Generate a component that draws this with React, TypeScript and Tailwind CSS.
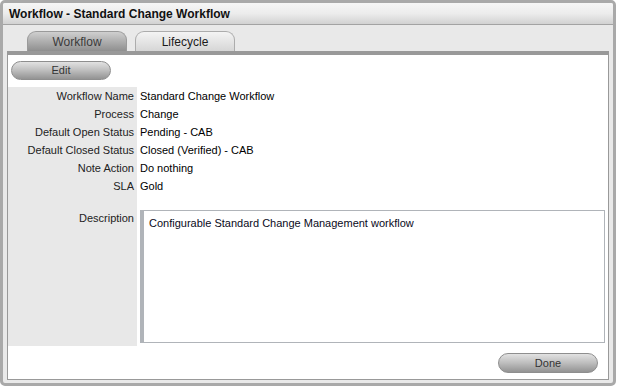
import React from "react";

const rows: [string, string][] = [
  ["Workflow Name", "Standard Change Workflow"],
  ["Process", "Change"],
  ["Default Open Status", "Pending - CAB"],
  ["Default Closed Status", "Closed (Verified) - CAB"],
  ["Note Action", "Do nothing"],
  ["SLA", "Gold"],
];

export default function App() {
  return (
    <div
      className="w-[616px] h-[386px] bg-white"
      style={{ fontFamily: '"Liberation Sans", Arial, Helvetica, sans-serif' }}
    >
      <div className="w-[616px] h-[386px] border-[3px] border-[#a9a9a9] rounded-[5px] bg-[#e9e9e9] flex flex-col overflow-hidden">
        {/* Title bar */}
        <div className="h-[22px] shrink-0 border-b border-[#a3a3a3] bg-gradient-to-b from-[#f6f6f6] via-[#ececec] to-[#d2d2d2] px-[6px] flex items-center">
          <span className="text-[12px] font-bold text-[#111] leading-none">
            Workflow - Standard Change Workflow
          </span>
        </div>
        {/* Tabs */}
        <div className="h-[26px] shrink-0 flex items-end pl-[24px] gap-[8px]">
          <div className="w-[100px] h-[20px] rounded-t-[9px] border border-b-0 border-[#9a9a9a] bg-gradient-to-b from-[#cfcfcf] to-[#8f8f8f] flex items-center justify-center text-[12px] text-[#3a3a3a]">
            Workflow
          </div>
          <div className="w-[100px] h-[20px] rounded-t-[9px] border border-b-0 border-[#acacac] bg-gradient-to-b from-[#f4f4f4] to-[#d6d6d6] flex items-center justify-center text-[12px] text-[#1a1a1a]">
            Lifecycle
          </div>
        </div>
        {/* Content */}
        <div className="flex-1 mx-[4px] mb-[3px] border-t-[4px] border-x border-b border-[#999] bg-white flex flex-col">
          <div className="pt-[6px] pl-[3px]">
            <button className="w-[100px] h-[19px] rounded-full border border-[#8e8e8e] bg-gradient-to-b from-[#e2e2e2] via-[#bdbdbd] to-[#939393] text-[11px] text-[#333] flex items-center justify-center">
              Edit
            </button>
          </div>
          <div className="mt-[7px] grid grid-cols-[129px_1fr] text-[11px]">
            {rows.map(([l, v]) => (
              <React.Fragment key={l}>
                <div className="h-[18px] leading-[18px] bg-[#e8e8e8] text-right pr-[3px] text-[#222]">
                  {l}
                </div>
                <div className="h-[18px] leading-[18px] pl-[3px] text-black">{v}</div>
              </React.Fragment>
            ))}
            <div className="h-[15px] bg-[#e8e8e8]" />
            <div className="h-[15px]" />
            <div className="bg-[#e8e8e8] text-right pr-[3px] pt-[1px] text-[#222] leading-[14px]">
              Description
            </div>
            <div className="pl-[3px] pr-[3px] pb-[3px]">
              <div className="h-[133px] border border-l-[4px] border-[#b0b4b9] pl-[5px] pt-[5px] text-[11px] text-[#0a0a1a] leading-[14px]">
                Configurable Standard Change Management workflow
              </div>
            </div>
          </div>
          <div className="flex justify-end pr-[10px] mt-[7px]">
            <button className="w-[100px] h-[20px] rounded-full border border-[#8e8e8e] bg-gradient-to-b from-[#e2e2e2] via-[#bdbdbd] to-[#939393] text-[11px] text-[#333] flex items-center justify-center">
              Done
            </button>
          </div>
        </div>
      </div>
    </div>
  );
}
